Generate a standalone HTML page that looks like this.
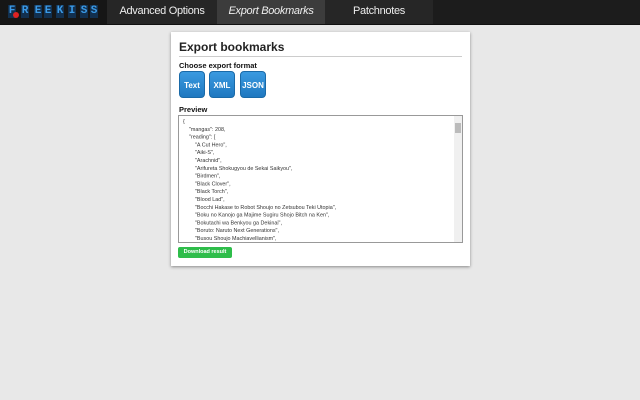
<!DOCTYPE html>
<html><head><style>
body{margin:0;width:640px;height:400px;background:#e8e8e8;font-family:"Liberation Sans",sans-serif;position:relative;overflow:hidden}
.nav{position:absolute;left:0;top:0;width:640px;height:24px;background:#1c1c1c;border-bottom:1px solid #111}
.logo{position:absolute;left:0;top:0;width:107px;height:24px;background:#161616;}
.logo span{position:absolute;top:5px;width:8px;height:13px;background:#12304f;font:bold 11px/13px "Liberation Mono",monospace;color:#3b9ae6;text-align:center}
.tab{position:absolute;top:0;height:24px;line-height:23px;text-align:center;color:#eee;font-size:11px;letter-spacing:-0.3px;background:#262626}
.panel{position:absolute;left:171px;top:32px;width:299px;height:234px;background:#fff;box-shadow:0 1px 3px #888}
h1{position:absolute;left:8px;top:8px;margin:0;font-size:12px;font-weight:bold;color:#222}
.rule{position:absolute;left:8px;top:24px;width:283px;height:1px;background:#ccc}
.lbl{position:absolute;left:8px;font-size:7.5px;font-weight:bold;color:#111}
.btn{position:absolute;top:39px;width:26px;height:27px;border-radius:4px;background:linear-gradient(#3a9ae0,#1f78c0);color:#fff;font-weight:bold;font-size:8px;line-height:27px;text-align:center;border:1px solid #1a6aa8;box-sizing:border-box}
.ta{position:absolute;left:7px;top:83px;width:285px;height:128px;border:1px solid #999;box-sizing:border-box;overflow:hidden}
.in{position:absolute;left:4px;top:2px;font-size:10.8px;line-height:15.6px;color:#333;white-space:pre;transform:scale(0.5);transform-origin:0 0}
.sb{position:absolute;right:0;top:0;width:8px;height:126px;background:#f0f0f0}
.sb i{position:absolute;left:1px;top:7px;width:6px;height:10px;background:#bbb}
.dl{position:absolute;left:7px;top:215px;width:54px;height:11px;border-radius:2px;background:#2ebd4a;color:#fff;font-size:5.5px;font-weight:bold;line-height:11px;text-align:center}
</style></head><body>
<div class="nav">
<div class="logo">
<span style="left:8px">F</span><span style="left:21px">R</span><span style="left:34px">E</span><span style="left:44px">E</span><span style="left:56px">K</span><span style="left:68px">I</span><span style="left:80px">S</span><span style="left:90px">S</span>
<b style="position:absolute;left:13px;top:12px;width:6px;height:6px;border-radius:50%;background:#d22"></b>
</div>
<div class="tab" style="left:107px;width:110px">Advanced Options</div>
<div class="tab" style="left:217px;width:108px;background:#3c3c3c;font-style:italic">Export Bookmarks</div>
<div class="tab" style="left:325px;width:108px">Patchnotes</div>
</div>
<div class="panel">
<h1>Export bookmarks</h1><div class="rule"></div>
<div class="lbl" style="top:29px">Choose export format</div>
<div class="btn" style="left:8px">Text</div>
<div class="btn" style="left:38px">XML</div>
<div class="btn" style="left:69px">JSON</div>
<div class="lbl" style="top:73px">Preview</div>
<div class="ta"><div class="in">{
    "mangas": 208,
    "reading": [
        "A Cut Hero",
        "Aiki-S",
        "Arachnid",
        "Arifureta Shokugyou de Sekai Saikyou",
        "Birdmen",
        "Black Clover",
        "Black Torch",
        "Blood Lad",
        "Bocchi Hakase to Robot Shoujo no Zetsubou Teki Utopia",
        "Boku no Kanojo ga Majime Sugiru Shojo Bitch na Ken",
        "Bokutachi wa Benkyou ga Dekinai",
        "Boruto: Naruto Next Generations",
        "Busou Shoujo Machiavellianism",
        "Cross account",
        "Darwin's Game",</div>
<div class="sb"><i></i></div></div>
<div class="dl">Download result</div>
</div>
</body></html>
